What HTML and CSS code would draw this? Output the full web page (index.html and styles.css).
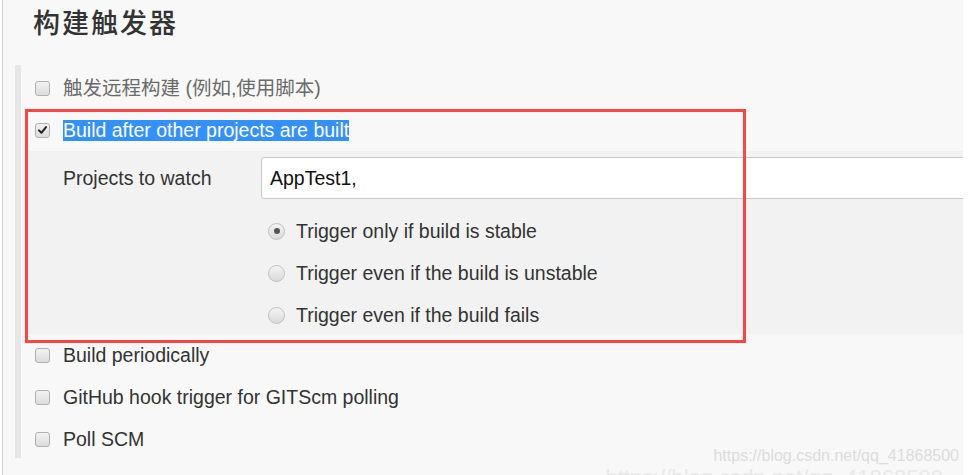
FILE: index.html
```html
<!DOCTYPE html>
<html lang="zh-CN">
<head>
<meta charset="utf-8">
<title>构建触发器</title>
<link rel="stylesheet" href="styles.css">
</head>
<body>
<div class="page">
  <h2 class="title">构建触发器</h2>
  <div class="section">
    <div class="row">
      <span class="checkbox"></span>
      <span class="label muted">触发远程构建 (例如,使用脚本)</span>
    </div>
    <div class="row">
      <span class="checkbox checked">
        <svg viewBox="0 0 14 14" width="14" height="14"><path d="M3.2 7.4 L5.8 10 L10.8 3.8" fill="none" stroke="#222" stroke-width="2.2" stroke-linecap="round" stroke-linejoin="round"/></svg>
      </span>
      <span class="label selected">Build after other projects are built</span>
    </div>
    <div class="nested">
      <div class="field">
        <span class="field-label">Projects to watch</span>
        <div class="input">AppTest1,</div>
      </div>
      <div class="radios">
        <div class="radio-row"><span class="radio on"></span><span class="label">Trigger only if build is stable</span></div>
        <div class="radio-row"><span class="radio"></span><span class="label">Trigger even if the build is unstable</span></div>
        <div class="radio-row"><span class="radio"></span><span class="label">Trigger even if the build fails</span></div>
      </div>
    </div>
    <div class="row">
      <span class="checkbox"></span>
      <span class="label">Build periodically</span>
    </div>
    <div class="row">
      <span class="checkbox"></span>
      <span class="label">GitHub hook trigger for GITScm polling</span>
    </div>
    <div class="row">
      <span class="checkbox"></span>
      <span class="label">Poll SCM</span>
    </div>
  </div>
  <div class="highlight"></div>
  <div class="watermark">https://blog.csdn.net/qq_41868500</div>
  <div class="watermark big">https://blog.csdn.net/qq_41868500</div>
</div>
</body>
</html>
```

FILE: styles.css
```css
html, body {
  margin: 0;
  padding: 0;
  background: #ffffff;
  height: 475px;
  overflow: hidden;
}
.page {
  position: relative;
  margin-left: 2px;
  width: 960px;
  height: 475px;
  border-left: 1px solid #d2d2d2;
  background: #f8f8f8;
  overflow: hidden;
  font-family: "Liberation Sans", Arial, "Noto Sans CJK SC", sans-serif;
  color: #333;
}
.title {
  margin: 0;
  padding: 4px 0 0 30px;
  height: 65px;
  box-sizing: border-box;
  font-family: "Noto Sans CJK SC", sans-serif;
  font-weight: 500;
  font-size: 27px;
  line-height: 36px;
  letter-spacing: 2px;
  color: #333;
}
.section {
  margin-left: 12px;
  border-left: 6px solid #e6e6e6;
  padding-top: 2px;
  height: 393px;
  box-sizing: border-box;
}
.row {
  display: flex;
  align-items: center;
  height: 42px;
  padding-left: 14px;
}
.checkbox {
  width: 13px;
  height: 13px;
  border: 1px solid #b0b0b0;
  border-radius: 3px;
  background: linear-gradient(#f2f2f2, #dcdcdc);
  box-sizing: content-box;
  display: flex;
  align-items: center;
  justify-content: center;
  flex: none;
}
.checkbox svg { display: block; }
.label {
  margin-left: 13px;
  font-size: 19.5px;
  line-height: 21px;
  color: #333;
  white-space: nowrap;
}
.muted {
  color: #6a6a6a;
  font-family: "Liberation Sans", "Noto Sans CJK SC", sans-serif;
}
.selected {
  background: #3390ff;
  color: #ffffff;
}
.nested {
  margin-left: 6px;
  background: #f2f2f2;
  padding: 6px 0 0 0;
  height: 183px;
  box-sizing: border-box;
}
.field {
  display: flex;
  align-items: center;
  height: 42px;
}
.field-label {
  width: 234px;
  padding-left: 36px;
  box-sizing: border-box;
  font-size: 19.5px;
  color: #333;
  flex: none;
}
.input {
  flex: none;
  width: 760px;
  height: 42px;
  box-sizing: border-box;
  background: #fff;
  border: 1px solid #c8c8c8;
  border-radius: 3px;
  padding-left: 8px;
  display: flex;
  align-items: center;
  font-size: 19.5px;
  color: #111;
}
.radios {
  padding-left: 241px;
  padding-top: 11px;
  height: 124px;
}
.radio-row {
  display: flex;
  align-items: center;
  height: 42px;
}
.radio {
  width: 15px;
  height: 15px;
  border-radius: 50%;
  border: 1px solid #c0c0c0;
  background: linear-gradient(#f4f4f4, #dadada);
  flex: none;
  display: flex;
  align-items: center;
  justify-content: center;
}
.radio.on::after {
  content: "";
  width: 6px;
  height: 6px;
  border-radius: 50%;
  background: #555;
}
.radio-row .label {
  margin-left: 11px;
}
.highlight {
  position: absolute;
  left: 22px;
  top: 109px;
  width: 721px;
  height: 234px;
  border: 3px solid #ff4444;
  box-sizing: border-box;
}
.watermark {
  position: absolute;
  right: 4px;
  top: 447px;
  font-size: 16px;
  color: #dcdcdc;
  white-space: nowrap;
}
.watermark.big {
  right: 20px;
  top: 465px;
  font-size: 22px;
  color: #e8e8e8;
}
```
